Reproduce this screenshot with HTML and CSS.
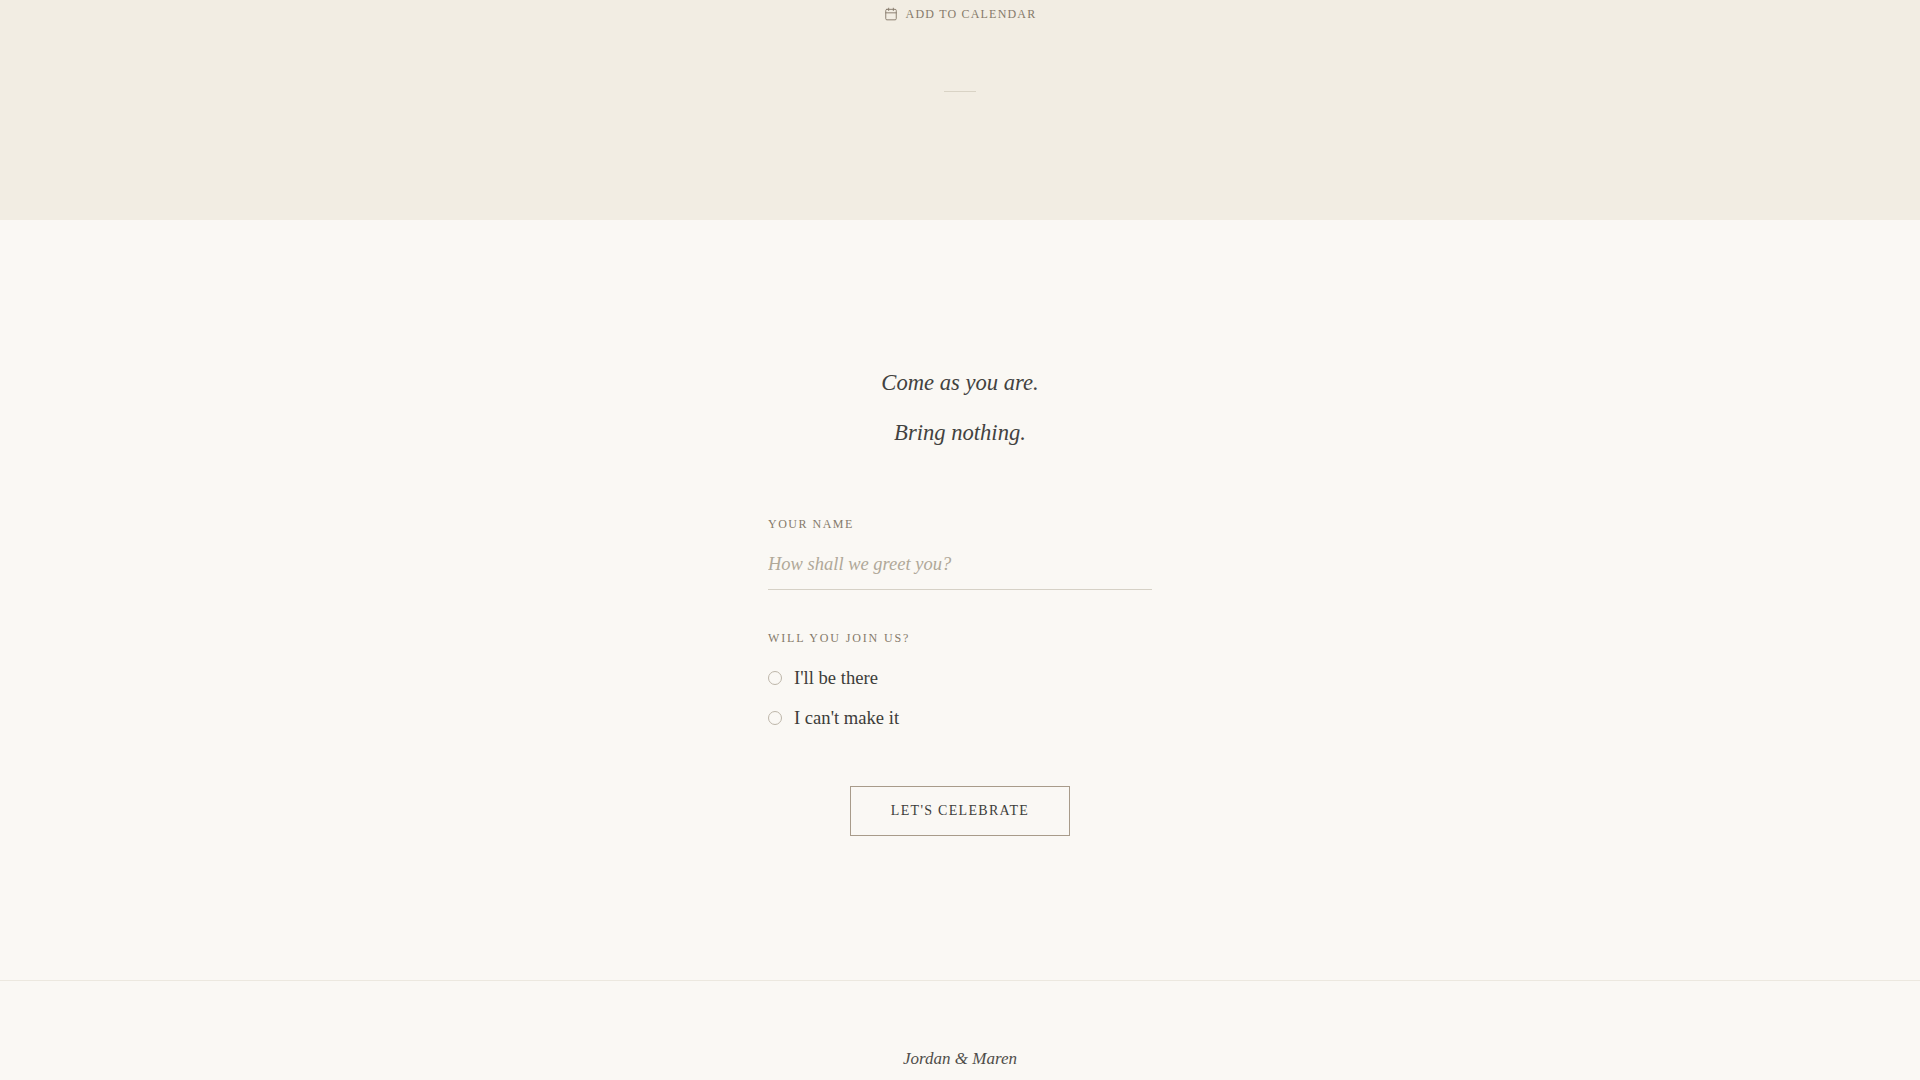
FILE: index.html
```html
<!DOCTYPE html>
<html lang="en">
<head>
    <meta charset="UTF-8">
    <meta name="viewport" content="width=device-width, initial-scale=1.0">
    <title>RSVP</title>
    <link rel="stylesheet" href="styles.css">
</head>
<body>
    <section class="details">
        <a class="calendar-link" href="#">
            <svg class="calendar-icon" viewBox="0 0 24 24" fill="none" stroke="currentColor" stroke-width="1.6" stroke-linecap="round" stroke-linejoin="round">
                <rect x="3" y="4" width="18" height="18" rx="2"></rect>
                <path d="M16 2v4M8 2v4M3 10h18"></path>
            </svg>
            <span>ADD TO CALENDAR</span>
        </a>
        <div class="rule"></div>
    </section>

    <section class="rsvp">
        <p class="intro">Come as you are.</p>
        <p class="intro intro-second">Bring nothing.</p>

        <form class="rsvp-form">
            <label class="field-label name-label" for="name">YOUR NAME</label>
            <input class="name-input" id="name" type="text" placeholder="How shall we greet you?">

            <p class="field-label join-label">WILL YOU JOIN US?</p>
            <label class="radio-row"><input type="radio" name="attending"><span>I'll be there</span></label>
            <label class="radio-row"><input type="radio" name="attending"><span>I can't make it</span></label>

            <div class="submit-row">
                <button class="submit-button" type="button">LET'S CELEBRATE</button>
            </div>
        </form>
    </section>

    <footer class="footer">
        <p class="names">Jordan &amp; Maren</p>
    </footer>
</body>
</html>
```

FILE: styles.css
```css
*{
    margin:0;
    padding:0;
    box-sizing:border-box;
}
html,body{
    height:1080px;
    overflow:hidden;
}
body{
    background-color:#faf8f4;
    color:#3d3d3a;
    font-family:"Liberation Serif",serif;
}
.details{
    background-color:#f2ede3;
    height:220px;
    display:flex;
    flex-direction:column;
    align-items:center;
    padding-top:6px;
}
.calendar-link{
    display:flex;
    align-items:center;
    gap:8px;
    color:#857a6a;
    text-decoration:none;
    font-size:12px;
    letter-spacing:1.2px;
    line-height:16px;
}
.calendar-icon{
    width:14px;
    height:14px;
}
.rule{
    width:32px;
    height:1px;
    background-color:#d9d3c5;
    margin-top:69px;
}
.rsvp{
    height:760px;
    padding-top:146px;
    display:flex;
    flex-direction:column;
    align-items:center;
}
.intro{
    font-size:22.6px;
    font-style:italic;
    line-height:34px;
    color:#424240;
}
.intro-second{
    margin-top:16px;
}
.rsvp-form{
    width:384px;
    margin-top:66px;
}
.field-label{
    display:block;
    font-size:12px;
    letter-spacing:1.85px;
    line-height:16px;
    color:#857a6a;
}
.name-label{
    letter-spacing:1.5px;
}
.name-input{
    display:block;
    width:100%;
    height:50px;
    margin-top:8px;
    background:transparent;
    border:none;
    border-bottom:1px solid #d6d1c6;
    outline:none;
    font-family:"Liberation Serif",serif;
    font-size:18.5px;
    color:#3d3d3a;
}
.name-input::placeholder{
    font-style:italic;
    color:#b0a899;
    opacity:1;
}
.join-label{
    margin-top:40px;
}
.radio-row{
    display:flex;
    align-items:center;
    gap:12px;
    height:40px;
    font-size:18.6px;
    color:#3d3d3a;
}
.join-label + .radio-row{
    margin-top:12px;
}
.radio-row input{
    appearance:none;
    width:14px;
    height:14px;
    border:1.5px solid #bdb6a9;
    border-radius:50%;
    background:transparent;
}
.submit-row{
    display:flex;
    justify-content:center;
    margin-top:48px;
}
.submit-button{
    width:220px;
    height:50px;
    background:transparent;
    border:1px solid #a89b8a;
    font-family:"Liberation Serif",serif;
    font-size:14px;
    letter-spacing:1.3px;
    color:#3d3d3a;
    cursor:pointer;
}
.footer{
    border-top:1px solid #ece8df;
    padding-top:66px;
    text-align:center;
}
.names{
    font-size:17px;
    font-style:italic;
    line-height:24px;
    color:#4f4d49;
}
```
